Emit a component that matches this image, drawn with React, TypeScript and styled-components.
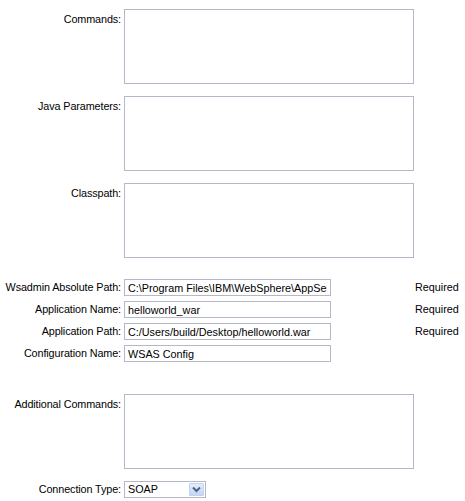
import React from "react";
import styled, { createGlobalStyle } from "styled-components";

const GlobalStyle = createGlobalStyle`
  html, body { margin: 0; padding: 0; background: #ffffff; }
  body { font-family: "Liberation Sans", Arial, sans-serif; font-size: 10.8px; color: #000; }
`;

const Form = styled.div`
  display: flex;
  flex-direction: column;
  width: 465px;
  padding-top: 9px;
`;

const Row = styled.div<{ $mt?: number; $top?: boolean }>`
  display: grid;
  grid-template-columns: 124px 291px 1fr;
  align-items: ${(p) => (p.$top ? "start" : "center")};
  margin-top: ${(p) => p.$mt ?? 0}px;
`;

const Label = styled.label<{ $top?: boolean }>`
  text-align: right;
  padding-right: 3px;
  padding-top: ${(p) => (p.$top ? "4px" : "0")};
  line-height: 13px;
  white-space: nowrap;
  letter-spacing: -0.1px;
`;

const TextArea = styled.textarea`
  box-sizing: border-box;
  width: 290px;
  height: 75px;
  margin: 0;
  border: 1px solid #b5b8c8;
  background: #fff;
  resize: none;
  padding: 2px 3px;
  font: inherit;
  outline: none;
  display: block;
`;

const Input = styled.input`
  box-sizing: border-box;
  width: 207px;
  height: 17px;
  margin: 0;
  border: 1px solid #b5b8c8;
  background: #fff;
  padding: 0 3px;
  font: inherit;
  color: #000;
  outline: none;
  display: block;
`;

const Required = styled.span`
  line-height: 13px;
  white-space: nowrap;
`;

const Select = styled.div`
  box-sizing: border-box;
  width: 82px;
  height: 17px;
  border: 1px solid #b5b8c8;
  background: #fff;
  display: flex;
  align-items: stretch;
`;

const SelectValue = styled.span`
  flex: 1;
  padding-left: 3px;
  line-height: 15px;
`;

const ArrowButton = styled.span`
  box-sizing: border-box;
  width: 15px;
  margin: 1px;
  border: 1px solid #c3d3ee;
  border-radius: 1px;
  background: linear-gradient(#e3ecfc, #c4d6f4);
  display: flex;
  align-items: center;
  justify-content: center;
`;

const Chevron = () => (
  <svg width="9" height="7" viewBox="0 0 9 7">
    <path d="M1 1.5 L4.5 5 L8 1.5" fill="none" stroke="#4d6185" strokeWidth="2" />
  </svg>
);

export default function App() {
  return (
    <>
      <GlobalStyle />
      <Form>
        <Row $top>
          <Label $top>Commands:</Label>
          <TextArea />
        </Row>
        <Row $top $mt={12}>
          <Label $top>Java Parameters:</Label>
          <TextArea />
        </Row>
        <Row $top $mt={12}>
          <Label $top>Classpath:</Label>
          <TextArea />
        </Row>
        <Row $mt={21}>
          <Label>Wsadmin Absolute Path:</Label>
          <Input defaultValue="C:\Program Files\IBM\WebSphere\AppServer\bin\wsadmin.bat" />
          <Required>Required</Required>
        </Row>
        <Row $mt={5}>
          <Label>Application Name:</Label>
          <Input defaultValue="helloworld_war" />
          <Required>Required</Required>
        </Row>
        <Row $mt={5}>
          <Label>Application Path:</Label>
          <Input defaultValue="C:/Users/build/Desktop/helloworld.war" />
          <Required>Required</Required>
        </Row>
        <Row $mt={5}>
          <Label>Configuration Name:</Label>
          <Input defaultValue="WSAS Config" />
        </Row>
        <Row $top $mt={32}>
          <Label $top>Additional Commands:</Label>
          <TextArea />
        </Row>
        <Row $mt={12}>
          <Label>Connection Type:</Label>
          <Select>
            <SelectValue>SOAP</SelectValue>
            <ArrowButton>
              <Chevron />
            </ArrowButton>
          </Select>
        </Row>
      </Form>
    </>
  );
}
